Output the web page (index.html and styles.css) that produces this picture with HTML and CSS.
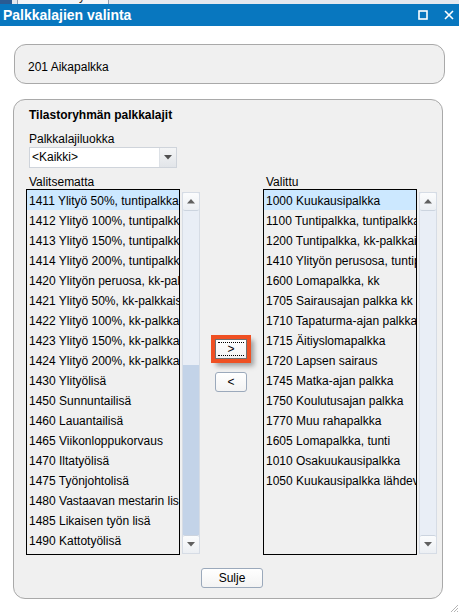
FILE: index.html
```html
<!DOCTYPE html>
<html>
<head>
<meta charset="utf-8">
<link rel="stylesheet" href="styles.css">
</head>
<body>
<div class="topstrip"><span class="tabdark"></span><span class="tab"><span class="tabtext">Tilastoryhmät</span></span></div>
<div class="titlebar">
  <span class="title">Palkkalajien valinta</span>
  <span class="ctrls">
    <svg width="10" height="10" viewBox="0 0 10 10"><rect x="1" y="1" width="8" height="8" fill="none" stroke="#fff" stroke-width="1.6"/></svg>
    <svg width="10" height="10" viewBox="0 0 10 10"><path d="M1 1 L9 9 M9 1 L1 9" stroke="#fff" stroke-width="1.6" fill="none"/></svg>
  </span>
</div>
<div class="content">
  <div class="box box1">201 Aikapalkka</div>
  <div class="box box2">
    <div class="heading">Tilastoryhmän palkkalajit</div>
    <div class="label">Palkkalajiluokka</div>
    <div class="select">
      <span class="seltext">&lt;Kaikki&gt;</span>
      <span class="selbtn"><svg width="8" height="5" viewBox="0 0 8 5"><path d="M0 0 H8 L4 4.5 Z" fill="#505050"/></svg></span>
    </div>
    <div class="lists">
      <div class="col">
        <div class="lbl2">Valitsematta</div>
        <div class="listwrap">
          <div class="list">
            <div class="item sel">1411 Ylityö 50%, tuntipalkka</div>
            <div class="item">1412 Ylityö 100%, tuntipalkka</div>
            <div class="item">1413 Ylityö 150%, tuntipalkka</div>
            <div class="item">1414 Ylityö 200%, tuntipalkka</div>
            <div class="item">1420 Ylityön peruosa, kk-palkkaiset</div>
            <div class="item">1421 Ylityö 50%, kk-palkkaiset</div>
            <div class="item">1422 Ylityö 100%, kk-palkkaiset</div>
            <div class="item">1423 Ylityö 150%, kk-palkkaiset</div>
            <div class="item">1424 Ylityö 200%, kk-palkkaiset</div>
            <div class="item">1430 Ylityölisä</div>
            <div class="item">1450 Sunnuntailisä</div>
            <div class="item">1460 Lauantailisä</div>
            <div class="item">1465 Viikonloppukorvaus</div>
            <div class="item">1470 Iltatyölisä</div>
            <div class="item">1475 Työnjohtolisä</div>
            <div class="item">1480 Vastaavan mestarin lisä</div>
            <div class="item">1485 Likaisen työn lisä</div>
            <div class="item">1490 Kattotyölisä</div>
          </div>
          <div class="sbar">
            <div class="sbtn"><svg width="8" height="5" viewBox="0 0 8 5"><path d="M0 4.5 H8 L4 0 Z" fill="#606060"/></svg></div>
            <div class="track"></div>
            <div class="track dark"></div>
            <div class="sbtn bottom"><svg width="8" height="5" viewBox="0 0 8 5"><path d="M0 0 H8 L4 4.5 Z" fill="#606060"/></svg></div>
          </div>
        </div>
      </div>
      <div class="mid">
        <button class="btn btnsel"><span class="focus">&gt;</span></button>
        <button class="btn"><span class="nofocus">&lt;</span></button>
      </div>
      <div class="col">
        <div class="lbl2">Valittu</div>
        <div class="listwrap">
          <div class="list">
            <div class="item sel">1000 Kuukausipalkka</div>
            <div class="item">1100 Tuntipalkka, tuntipalkkaiset</div>
            <div class="item">1200 Tuntipalkka, kk-palkkaiset</div>
            <div class="item">1410 Ylityön perusosa, tuntipalkka</div>
            <div class="item">1600 Lomapalkka, kk</div>
            <div class="item">1705 Sairausajan palkka kk</div>
            <div class="item">1710 Tapaturma-ajan palkka</div>
            <div class="item">1715 Äitiyslomapalkka</div>
            <div class="item">1720 Lapsen sairaus</div>
            <div class="item">1745 Matka-ajan palkka</div>
            <div class="item">1750 Koulutusajan palkka</div>
            <div class="item">1770 Muu rahapalkka</div>
            <div class="item">1605 Lomapalkka, tunti</div>
            <div class="item">1010 Osakuukausipalkka</div>
            <div class="item">1050 Kuukausipalkka lähdevero</div>
          </div>
          <div class="sbar">
            <div class="sbtn"><svg width="8" height="5" viewBox="0 0 8 5"><path d="M0 4.5 H8 L4 0 Z" fill="#606060"/></svg></div>
            <div class="track"></div>
            <div class="sbtn bottom"><svg width="8" height="5" viewBox="0 0 8 5"><path d="M0 0 H8 L4 4.5 Z" fill="#606060"/></svg></div>
          </div>
        </div>
      </div>
    </div>
    <div class="footer"><button class="btn sulje">Sulje</button></div>
  </div>
</div>
<div class="grip"><svg width="9" height="9" viewBox="0 0 9 9"><path d="M8 1 L1 8 M8 4 L4 8 M8 7 L7 8" stroke="#b5b5b5" stroke-width="1" fill="none"/></svg></div>
</body>
</html>
```
FILE: styles.css
```css
* { box-sizing: border-box; }
body {
  margin: 0;
  width: 459px;
  height: 613px;
  overflow: hidden;
  position: relative;
  background: #fff;
  font-family: "Liberation Sans", Arial, sans-serif;
  font-size: 12px;
  color: #000;
}
.topstrip {
  height: 4px;
  background: #e4e8ee;
  display: flex;
  overflow: hidden;
}
.tabdark { width: 12px; background: #2a5b93; }
.tab {
  margin-left: 5px;
  width: 92px;
  background: #f3f5f8;
  border-left: 1px solid #8f9cb0;
  border-right: 1px solid #8f9cb0;
  overflow: hidden;
  position: relative;
}
.tabtext {
  display: block;
  margin-top: -10px;
  padding-left: 22px;
  font-size: 12px;
  line-height: 13px;
  color: #222;
}
.titlebar {
  height: 22px;
  background: #0877bf;
  color: #fff;
  display: flex;
  align-items: center;
  justify-content: space-between;
}
.title {
  font-weight: bold;
  font-size: 14px;
  line-height: 22px;
  padding-left: 3px;
}
.ctrls {
  display: flex;
  gap: 16px;
  padding-right: 5px;
  align-items: center;
}
.ctrls svg { display: block; }
.content { padding-top: 18px; }
.box {
  background: #f0f0f0;
  border: 1px solid #a9a9a9;
  border-radius: 12px;
}
.box1 {
  margin-left: 14px;
  width: 431px;
  height: 40px;
  padding: 14px 0 0 13px;
  line-height: 16px;
}
.box2 {
  margin-top: 15px;
  margin-left: 13px;
  width: 430px;
  height: 500px;
  padding: 7px 5px 0 12px;
}
.heading {
  font-weight: bold;
  line-height: 16px;
  padding-left: 3px;
}
.label {
  margin-top: 8px;
  line-height: 16px;
  padding-left: 3px;
}
.select {
  margin-left: 3px;
  width: 148px;
  height: 21px;
  border: 1px solid #cfd4db;
  background: #fff;
  display: flex;
}
.seltext {
  flex: 1;
  line-height: 19px;
  padding-left: 2px;
}
.selbtn {
  width: 17px;
  border-left: 1px solid #dde1e6;
  background: linear-gradient(#f4f5f6, #e2e5e9);
  display: flex;
  align-items: center;
  justify-content: center;
}
.selbtn svg { display: block; }
.lists { display: flex; }
.col { width: 174px; display: flex; flex-direction: column; }
.lbl2 {
  line-height: 14px;
  padding-top: 7px;
  padding-left: 3px;
}
.listwrap {
  display: flex;
  gap: 2px;
  height: 366px;
}
.list {
  width: 154px;
  height: 366px;
  border: 1px solid #000;
  overflow: hidden;
}
.item {
  height: 20px;
  line-height: 22px;
  padding-left: 2px;
  white-space: nowrap;
  overflow: hidden;
}
.item.sel { background: #cce8ff; }
.sbar {
  width: 18px;
  margin-top: 3px;
  height: 362px;
  border: 1px solid #d6dce5;
  background: #e9eef6;
  display: flex;
  flex-direction: column;
}
.sbtn {
  height: 18px;
  background: linear-gradient(#fbfcfd, #eceff3);
  border-bottom: 1px solid #ccd4df;
  display: flex;
  align-items: center;
  justify-content: center;
  border-radius: 2px;
}
.sbtn.bottom { border-bottom: none; border-top: 1px solid #ccd4df; }
.sbtn svg { display: block; }
.track { flex: 1; }
.track.dark { flex: 0 0 170px; background: #c3d3e8; }
.mid {
  width: 63px;
  padding-top: 171px;
  padding-left: 15px;
  display: flex;
  flex-direction: column;
  gap: 13px;
}
.btn {
  width: 32px;
  height: 20px;
  padding: 0;
  border: 1px solid #9ba9bb;
  border-radius: 3px;
  background: linear-gradient(#ffffff, #f3f3f3);
  font-family: "Liberation Sans", Arial, sans-serif;
  font-size: 12px;
  color: #000;
}
.btnsel {
  border-color: #707070;
  border-radius: 0;
  box-shadow: 0 0 0 4px #ef5023, 4px 4px 5px 3px rgba(0, 0, 0, 0.35);
}
.focus {
  display: block;
  margin: 2px 2px;
  height: 14px;
  border-top: 1px dotted #000;
  border-bottom: 1px dotted #000;
  line-height: 12px;
}
.nofocus { display: block; line-height: 18px; }
.footer {
  margin-top: 13px;
  padding-left: 175px;
}
.sulje { width: 62px; line-height: 18px; }
.grip {
  position: absolute;
  right: 0;
  bottom: 0;
  width: 9px;
  height: 9px;
}
.grip svg { display: block; }
```
